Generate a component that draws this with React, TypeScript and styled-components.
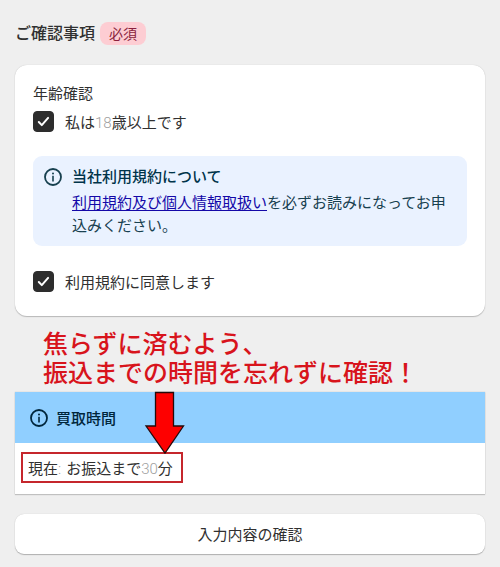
import React, { useId, useState } from "react";
import styled, { createGlobalStyle } from "styled-components";

const GlobalStyle = createGlobalStyle`
  *, *::before, *::after { box-sizing: border-box; }
  body {
    margin: 0;
    background: #efefef;
    color: #303030;
    font-family: "Noto Sans CJK JP", "Noto Sans", sans-serif;
    font-size: 15px;
    line-height: 20px;
  }
`;

const Page = styled.main`
  display: flex;
  flex-direction: column;
  padding: 22px 15px 12px;
`;

const Heading = styled.header`
  display: flex;
  align-items: center;
  gap: 5px;
  margin-bottom: 20px;
`;

const Title = styled.h1`
  margin: 0;
  font-size: 16px;
  line-height: 20px;
  padding-bottom: 3px;
  font-weight: 500;
`;

const Badge = styled.span`
  padding: 0 9px;
  border-radius: 8px;
  background: #fdcdd3;
  color: #8a1f3d;
  font-size: 14px;
  line-height: 23px;
`;

const Card = styled.section`
  display: flex;
  flex-direction: column;
  padding: 18px 18px 24px;
  border-radius: 12px;
  background: #fff;
  box-shadow: 0 1px 1px #b8b8b8, 0 0 1px #bcbcbc;
`;

const Group = styled.fieldset`
  margin: 0;
  padding: 0;
  border: 0;
`;

const Legend = styled.legend`
  padding: 0;
  margin-bottom: 8px;
`;

const CheckRow = styled.label`
  display: flex;
  align-items: center;
  gap: 11px;
  height: 21px;
`;

const CheckHolder = styled.span`
  display: grid;
  flex: none;
  width: 21px;
  height: 21px;

  > * { grid-area: 1 / 1; }
  > svg { pointer-events: none; }
`;

const CheckInput = styled.input`
  appearance: none;
  width: 21px;
  height: 21px;
  margin: 0;
  border: 1px solid #2d2d2d;
  border-radius: 4px;
  background: #fff;
  &:checked { background: #2d2d2d; }
`;

const Thin = styled.span`
  font-family: Roboto, "Noto Sans CJK JP", sans-serif;
  font-weight: 300;
  line-height: 1;
  color: #a0a0a0;
`;

const ThinColon = styled(Thin)`
  margin-right: 5px;
`;

const Notice = styled.div`
  display: flex;
  gap: 10px;
  margin: 24px 0 25px;
  padding: 9px 12px 10px 11px;
  border-radius: 9px;
  background: #eaf2ff;
  color: #17404f;

  > svg { flex: none; margin-top: 3px; }
`;

const NoticeTitle = styled.h2`
  margin: 0 0 3px;
  color: #00344a;
  font-size: 15px;
  line-height: 22px;
  font-weight: 500;
`;

const NoticeText = styled.p`
  margin: 0;
  line-height: 23px;
`;

const TermsLink = styled.a`
  color: #1408a8;
  text-decoration: underline;
  text-underline-offset: 2px;
`;

const Callout = styled.p`
  margin: 12px 0 6px;
  padding-left: 28px;
  color: #d8141c;
  font-size: 25px;
  line-height: 29px;
  font-weight: 500;
`;

const TimePanel = styled.section`
  position: relative;
  background: #fff;
  box-shadow: 0 1px 1px #c0c0c0, 0 0 1px #bcbcbc;
`;

const TimeHeader = styled.h2`
  display: flex;
  align-items: center;
  gap: 8px;
  height: 51px;
  margin: 0;
  padding: 0 15px;
  background: #90cfff;
  color: #00263c;
  font-size: 15px;
  line-height: 20px;
  font-weight: 500;
`;

const TimeBody = styled.div`
  display: flex;
  padding: 9px 6px 11px;
`;

const Marked = styled.p`
  margin: 0;
  padding: 4px 8px 3px 5px;
  border: 2px solid #c5262c;
`;

const Arrow = styled.svg`
  position: absolute;
  top: -1px;
  left: 129px;
`;

const Submit = styled.button`
  height: 40px;
  margin-top: 20px;
  border: 0;
  border-radius: 9px;
  background: #fff;
  color: #303030;
  font: inherit;
  box-shadow: 0 1px 1px #b0b0b0, 0 0 1px #c4c4c4;
`;

function InfoIcon() {
  return (
    <svg width="18" height="18" viewBox="0 0 18 18" fill="none" aria-hidden="true">
      <circle cx="9" cy="9" r="8" stroke="currentColor" strokeWidth="1.8" />
      <circle cx="9" cy="5.4" r="1" fill="currentColor" />
      <path d="M9 7.8v5.7" stroke="currentColor" strokeWidth="1.6" />
    </svg>
  );
}

function Checkbox({ children }: { children: React.ReactNode }) {
  const id = useId();
  const [checked, setChecked] = useState(true);
  return (
    <CheckRow htmlFor={id}>
      <CheckHolder>
        <CheckInput
          id={id}
          type="checkbox"
          checked={checked}
          onChange={(event) => setChecked(event.target.checked)}
        />
        {checked && (
          <svg width="21" height="21" viewBox="0 0 21 21" fill="none" aria-hidden="true">
            <path
              d="M5.8 11l3 3.1 6.3-7.2"
              stroke="#fff"
              strokeWidth="2"
              strokeLinecap="round"
              strokeLinejoin="round"
            />
          </svg>
        )}
      </CheckHolder>
      <span>{children}</span>
    </CheckRow>
  );
}

export default function App() {
  return (
    <>
      <GlobalStyle />
      <Page lang="ja">
        <Heading>
          <Title>ご確認事項</Title>
          <Badge>必須</Badge>
        </Heading>
        <Card>
          <Group>
            <Legend>年齢確認</Legend>
            <Checkbox>
              私は<Thin>18</Thin>歳以上です
            </Checkbox>
          </Group>
          <Notice>
            <InfoIcon />
            <div>
              <NoticeTitle>当社利用規約について</NoticeTitle>
              <NoticeText>
                <TermsLink href="#terms">利用規約及び個人情報取扱い</TermsLink>
                を必ずお読みになってお申込みください。
              </NoticeText>
            </div>
          </Notice>
          <Checkbox>利用規約に同意します</Checkbox>
        </Card>
        <Callout>
          焦らずに済むよう、
          <br />
          振込までの時間を忘れずに確認！
        </Callout>
        <TimePanel>
          <TimeHeader>
            <InfoIcon />
            買取時間
          </TimeHeader>
          <TimeBody>
            <Marked>
              現在<ThinColon>:</ThinColon>お振込まで<Thin>30</Thin>分
            </Marked>
          </TimeBody>
          <Arrow width="42" height="64" viewBox="0 0 42 64" aria-hidden="true">
            <path
              d="M11.5 1.5h18v33.5h10L21 62 2 35h9.5z"
              fill="#fe0000"
              stroke="#240a0a"
              strokeWidth="1.3"
            />
          </Arrow>
        </TimePanel>
        <Submit type="button">入力内容の確認</Submit>
      </Page>
    </>
  );
}
